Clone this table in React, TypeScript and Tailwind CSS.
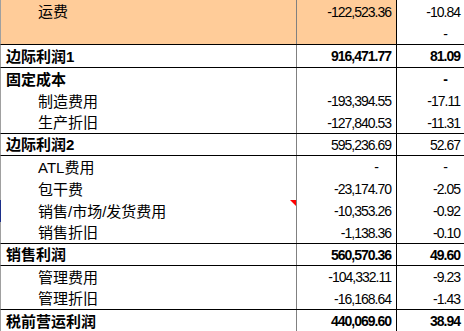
type Row = {
  label: string
  amount?: string
  pct?: string
  bold?: boolean
  boldNums?: boolean
  indent?: boolean
  orange?: boolean
  line?: boolean
  h: string
  note?: boolean
  blue?: boolean
}

const rows: Row[] = [
  { label: '运费', amount: '-122,523.36', pct: '-10.84', indent: true, orange: true, h: 'h-[23px]' },
  { label: '', pct: '-', orange: true, line: true, h: 'h-[22px]' },
  { label: '边际利润1', amount: '916,471.77', pct: '81.09', bold: true, boldNums: true, line: true, h: 'h-[23px]' },
  { label: '固定成本', pct: '-', bold: true, boldNums: true, h: 'h-[22px]' },
  { label: '制造费用', amount: '-193,394.55', pct: '-17.11', indent: true, h: 'h-[22px]' },
  { label: '生产折旧', amount: '-127,840.53', pct: '-11.31', indent: true, line: true, h: 'h-[22px]' },
  { label: '边际利润2', amount: '595,236.69', pct: '52.67', bold: true, line: true, h: 'h-[22px]' },
  { label: 'ATL费用', amount: '-', pct: '-', indent: true, h: 'h-[22px]' },
  { label: '包干费', amount: '-23,174.70', pct: '-2.05', indent: true, h: 'h-[22px]' },
  { label: '销售/市场/发货费用', amount: '-10,353.26', pct: '-0.92', indent: true, note: true, blue: true, h: 'h-[22px]' },
  { label: '销售折旧', amount: '-1,138.36', pct: '-0.10', indent: true, line: true, h: 'h-[22px]' },
  { label: '销售利润', amount: '560,570.36', pct: '49.60', bold: true, boldNums: true, line: true, h: 'h-[22px]' },
  { label: '管理费用', amount: '-104,332.11', pct: '-9.23', indent: true, h: 'h-[22px]' },
  { label: '管理折旧', amount: '-16,168.64', pct: '-1.43', indent: true, line: true, h: 'h-[22px]' },
  { label: '税前营运利润', amount: '440,069.60', pct: '38.94', bold: true, boldNums: true, h: 'h-[22px]' },
]

const Num = ({ value, bold }: { value?: string; bold?: boolean }) => {
  if (!value) return null
  const dash = value === '-'
  return (
    <span
      className={`text-[14px] leading-none tracking-[-1px] ${bold ? 'font-bold' : ''} ${dash ? 'mr-[13px]' : ''}`}
    >
      {value}
    </span>
  )
}

export default function App() {
  return (
    <div className="w-[464px] h-[331px] overflow-hidden bg-white text-black font-['Liberation_Sans','Noto_Sans_CJK_SC',sans-serif]">
      {rows.map((r, i) => (
        <div
          key={i}
          className={`flex ${r.h} border-l ${r.blue ? 'border-l-[#1c2f8a]' : 'border-l-[#a0a0a0]'} ${
            r.line ? 'border-b border-b-black' : ''
          }`}
        >
          <div
            className={`relative w-[296px] shrink-0 flex items-center border-r border-r-[#808080] ${
              r.orange ? 'bg-[#ffcc99]' : ''
            } ${r.indent ? 'pl-[37px]' : 'pl-[5px]'}`}
          >
            <span className={`text-[15px] leading-none ${r.bold ? 'font-bold' : ''}`}>{r.label}</span>
            {r.note && (
              <span className="absolute right-0 top-0 w-0 h-0 border-l-[6px] border-l-transparent border-t-[6px] border-t-[#ff0000]" />
            )}
          </div>
          <div
            className={`w-[100px] shrink-0 flex items-center justify-end pr-[5px] border-r border-r-black ${
              r.orange ? 'bg-[#ffcc99]' : ''
            }`}
          >
            <Num value={r.amount} bold={r.boldNums} />
          </div>
          <div className="flex-1 flex items-center justify-end pr-[4px]">
            <Num value={r.pct} bold={r.boldNums} />
          </div>
        </div>
      ))}
    </div>
  )
}
